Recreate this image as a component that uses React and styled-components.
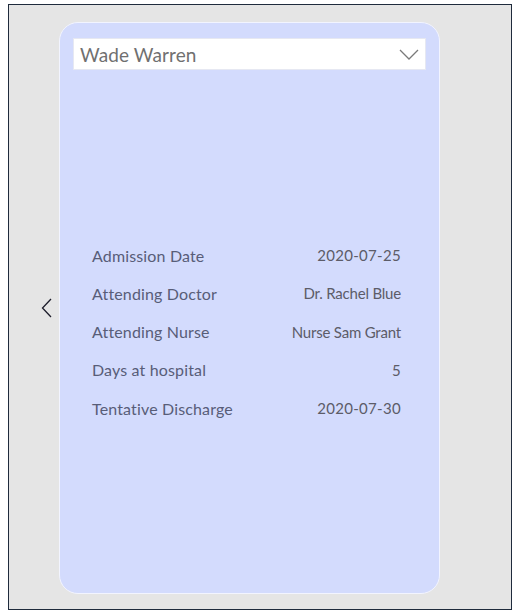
import React from "react";
import styled, { createGlobalStyle } from "styled-components";

const Global = createGlobalStyle`
  html, body { margin: 0; padding: 0; background: #ffffff; }
  body { font-family: "Lato", "Open Sans", sans-serif; }
`;

const Frame = styled.div`
  box-sizing: border-box;
  margin: 4px 0 0 8px;
  width: 504px;
  height: 606px;
  border: 1px solid #1f2b3c;
  background: #e5e5e5;
  display: flex;
  align-items: flex-start;
  padding-top: 17px;
`;

const NavButton = styled.button`
  box-sizing: border-box;
  width: 50px;
  height: 571px;
  padding: 0 6px 0 0;
  border: none;
  background: transparent;
  display: flex;
  align-items: center;
  justify-content: flex-end;
  cursor: pointer;
`;

const Card = styled.div`
  box-sizing: border-box;
  width: 381px;
  height: 572px;
  background: #d3dbfd;
  border: 1px solid #f2f4ff;
  border-radius: 19px;
  padding: 15px 13px 0 13px;
  display: flex;
  flex-direction: column;
`;

const Select = styled.div`
  box-sizing: border-box;
  height: 32px;
  background: #ffffff;
  border: 1px solid #e6e8f2;
  display: flex;
  align-items: center;
  justify-content: space-between;
  padding: 0 6px 0 6px;
`;

const SelectText = styled.span`
  font-family: "Lato", sans-serif;
  font-size: 19px;
  color: #707070;
  letter-spacing: 0.1px;
`;

const Details = styled.div`
  margin-top: 174.5px;
  padding: 0 25px 0 19px;
  display: flex;
  flex-direction: column;
  gap: 17.3px;
`;

const Row = styled.div`
  display: flex;
  justify-content: space-between;
  align-items: center;
  height: 21px;
  font-family: "Lato", sans-serif;
`;

const Label = styled.span`
  color: #585d78;
  font-size: 16px;
  letter-spacing: 0.15px;
`;

const Value = styled.span`
  color: #5c5c68;
  font-size: 15px;
  letter-spacing: ${(p) => (p.$narrow ? "-0.2px" : "0.3px")};
`;

const rows = [
  ["Admission Date", "2020-07-25"],
  ["Attending Doctor", "Dr. Rachel Blue", true],
  ["Attending Nurse", "Nurse Sam Grant", true],
  ["Days at hospital", "5"],
  ["Tentative Discharge", "2020-07-30"],
];

export default function App() {
  return (
    <>
      <Global />
      <Frame>
        <NavButton aria-label="Previous">
          <svg width="12" height="20" viewBox="0 0 12 20">
            <path d="M10 1 L1.5 10 L10 19" fill="none" stroke="#1d1d2b" strokeWidth="1.3" />
          </svg>
        </NavButton>
        <Card>
          <Select>
            <SelectText>Wade Warren</SelectText>
            <svg width="20" height="11" viewBox="0 0 20 11">
              <path d="M1 1 L10 10 L19 1" fill="none" stroke="#7a7a7a" strokeWidth="1.3" />
            </svg>
          </Select>
          <Details>
            {rows.map(([l, v, n]) => (
              <Row key={l}>
                <Label>{l}</Label>
                <Value $narrow={n}>{v}</Value>
              </Row>
            ))}
          </Details>
        </Card>
      </Frame>
    </>
  );
}
